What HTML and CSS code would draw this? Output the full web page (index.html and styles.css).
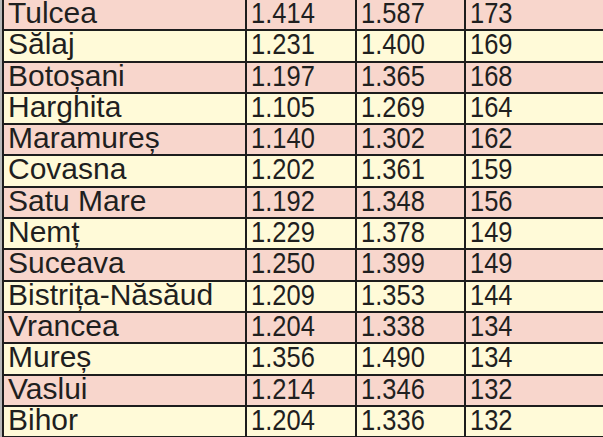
FILE: index.html
```html
<!DOCTYPE html>
<html lang="ro">
<head>
<meta charset="utf-8">
<title>Județe</title>
<link rel="stylesheet" href="styles.css">
</head>
<body>
<table class="data">
  <colgroup>
    <col class="c-name">
    <col class="c-num">
    <col class="c-num2">
    <col class="c-last">
  </colgroup>
  <tbody>
    <tr><td class="name">Tulcea</td><td><span class="num">1.414</span></td><td><span class="num">1.587</span></td><td class="last"><span class="num">173</span></td></tr>
    <tr><td class="name">Sălaj</td><td><span class="num">1.231</span></td><td><span class="num">1.400</span></td><td class="last"><span class="num">169</span></td></tr>
    <tr><td class="name">Botoșani</td><td><span class="num">1.197</span></td><td><span class="num">1.365</span></td><td class="last"><span class="num">168</span></td></tr>
    <tr><td class="name">Harghita</td><td><span class="num">1.105</span></td><td><span class="num">1.269</span></td><td class="last"><span class="num">164</span></td></tr>
    <tr><td class="name">Maramureș</td><td><span class="num">1.140</span></td><td><span class="num">1.302</span></td><td class="last"><span class="num">162</span></td></tr>
    <tr><td class="name">Covasna</td><td><span class="num">1.202</span></td><td><span class="num">1.361</span></td><td class="last"><span class="num">159</span></td></tr>
    <tr><td class="name">Satu Mare</td><td><span class="num">1.192</span></td><td><span class="num">1.348</span></td><td class="last"><span class="num">156</span></td></tr>
    <tr><td class="name">Nemț</td><td><span class="num">1.229</span></td><td><span class="num">1.378</span></td><td class="last"><span class="num">149</span></td></tr>
    <tr><td class="name">Suceava</td><td><span class="num">1.250</span></td><td><span class="num">1.399</span></td><td class="last"><span class="num">149</span></td></tr>
    <tr><td class="name">Bistrița-Năsăud</td><td><span class="num">1.209</span></td><td><span class="num">1.353</span></td><td class="last"><span class="num">144</span></td></tr>
    <tr><td class="name">Vrancea</td><td><span class="num">1.204</span></td><td><span class="num">1.338</span></td><td class="last"><span class="num">134</span></td></tr>
    <tr><td class="name">Mureș</td><td><span class="num">1.356</span></td><td><span class="num">1.490</span></td><td class="last"><span class="num">134</span></td></tr>
    <tr><td class="name">Vaslui</td><td><span class="num">1.214</span></td><td><span class="num">1.346</span></td><td class="last"><span class="num">132</span></td></tr>
    <tr><td class="name">Bihor</td><td><span class="num">1.204</span></td><td><span class="num">1.336</span></td><td class="last"><span class="num">132</span></td></tr>
  </tbody>
</table>
</body>
</html>
```
FILE: styles.css
```css
html, body {
  margin: 0;
  padding: 0;
  overflow: hidden;
}
body {
  background: #b9b9b9;
  font-family: "Liberation Sans", Arial, sans-serif;
  color: #1f1f1f;
}
.data {
  margin-left: 2px;
  width: 601px;
  table-layout: fixed;
  border-collapse: separate;
  border-spacing: 0;
  border-left: 2px solid #1d1d1d;
  font-size: 30px;
}
.c-name { width: 243px; }
.c-num { width: 110px; }
.c-num2 { width: 109px; }
.c-last { width: 137px; }
.data tr { height: 31.3px; }
.data tr:nth-child(odd) td { background: #f8d6cc; }
.data tr:nth-child(even) td { background: #fffad8; }
.data td {
  box-sizing: border-box;
  padding: 0 0 0 4px;
  vertical-align: top;
  line-height: 25px;
  height: 31.3px;
  border-right: 2px solid #1d1d1d;
  border-bottom: 2px solid #1d1d1d;
  white-space: nowrap;
}
.data td.last { border-right: 0; }
.num {
  display: inline-block;
  transform: scaleX(0.85);
  transform-origin: 0 50%;
}
```
